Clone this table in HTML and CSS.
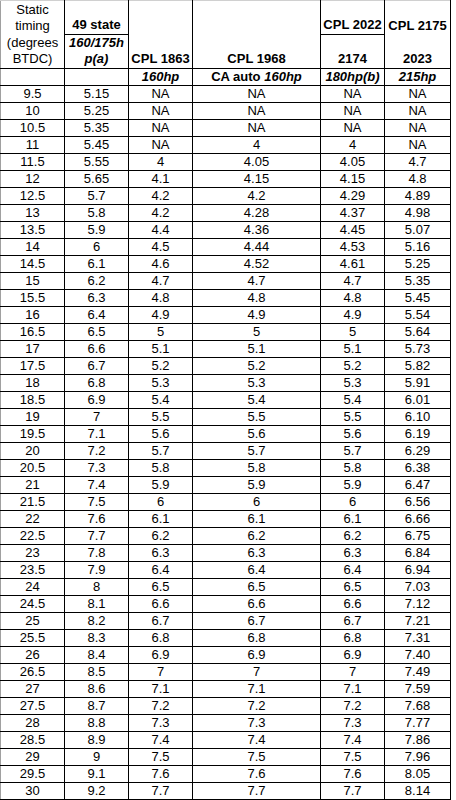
FILE: index.html
```html
<!DOCTYPE html>
<html>
<head>
<meta charset="utf-8">
<link rel="stylesheet" href="styles.css">
</head>
<body>
<table class="sheet">
  <colgroup>
    <col class="w64"><col class="w64"><col class="w64"><col class="w128"><col class="w64"><col class="w66">
  </colgroup>
  <tbody>
    <tr class="hrow">
      <td rowspan="2" class="top plain label">Static timing (degrees BTDC)</td>
      <td class="top b">49 state</td>
      <td rowspan="2" class="top b">CPL 1863</td>
      <td rowspan="2" class="top b">CPL 1968</td>
      <td class="top b">CPL 2022</td>
      <td class="top b nobot">CPL 2175</td>
    </tr>
    <tr class="hrow">
      <td class="b i">160/175h<wbr>p(a)</td>
      <td class="b">2174</td>
      <td class="b notop">2023</td>
    </tr>
    <tr class="drow">
      <td></td>
      <td></td>
      <td class="b i">160hp</td>
      <td class="b">CA auto <span class="i">160hp</span></td>
      <td class="b i">180hp(b)</td>
      <td class="b i">215hp</td>
    </tr>
    <tr class="drow"><td>9.5</td><td>5.15</td><td>NA</td><td>NA</td><td>NA</td><td>NA</td></tr>
    <tr class="drow"><td>10</td><td>5.25</td><td>NA</td><td>NA</td><td>NA</td><td>NA</td></tr>
    <tr class="drow"><td>10.5</td><td>5.35</td><td>NA</td><td>NA</td><td>NA</td><td>NA</td></tr>
    <tr class="drow"><td>11</td><td>5.45</td><td>NA</td><td>4</td><td>4</td><td>NA</td></tr>
    <tr class="drow"><td>11.5</td><td>5.55</td><td>4</td><td>4.05</td><td>4.05</td><td>4.7</td></tr>
    <tr class="drow"><td>12</td><td>5.65</td><td>4.1</td><td>4.15</td><td>4.15</td><td>4.8</td></tr>
    <tr class="drow"><td>12.5</td><td>5.7</td><td>4.2</td><td>4.2</td><td>4.29</td><td>4.89</td></tr>
    <tr class="drow"><td>13</td><td>5.8</td><td>4.2</td><td>4.28</td><td>4.37</td><td>4.98</td></tr>
    <tr class="drow"><td>13.5</td><td>5.9</td><td>4.4</td><td>4.36</td><td>4.45</td><td>5.07</td></tr>
    <tr class="drow"><td>14</td><td>6</td><td>4.5</td><td>4.44</td><td>4.53</td><td>5.16</td></tr>
    <tr class="drow"><td>14.5</td><td>6.1</td><td>4.6</td><td>4.52</td><td>4.61</td><td>5.25</td></tr>
    <tr class="drow"><td>15</td><td>6.2</td><td>4.7</td><td>4.7</td><td>4.7</td><td>5.35</td></tr>
    <tr class="drow"><td>15.5</td><td>6.3</td><td>4.8</td><td>4.8</td><td>4.8</td><td>5.45</td></tr>
    <tr class="drow"><td>16</td><td>6.4</td><td>4.9</td><td>4.9</td><td>4.9</td><td>5.54</td></tr>
    <tr class="drow"><td>16.5</td><td>6.5</td><td>5</td><td>5</td><td>5</td><td>5.64</td></tr>
    <tr class="drow"><td>17</td><td>6.6</td><td>5.1</td><td>5.1</td><td>5.1</td><td>5.73</td></tr>
    <tr class="drow"><td>17.5</td><td>6.7</td><td>5.2</td><td>5.2</td><td>5.2</td><td>5.82</td></tr>
    <tr class="drow"><td>18</td><td>6.8</td><td>5.3</td><td>5.3</td><td>5.3</td><td>5.91</td></tr>
    <tr class="drow"><td>18.5</td><td>6.9</td><td>5.4</td><td>5.4</td><td>5.4</td><td>6.01</td></tr>
    <tr class="drow"><td>19</td><td>7</td><td>5.5</td><td>5.5</td><td>5.5</td><td>6.10</td></tr>
    <tr class="drow"><td>19.5</td><td>7.1</td><td>5.6</td><td>5.6</td><td>5.6</td><td>6.19</td></tr>
    <tr class="drow"><td>20</td><td>7.2</td><td>5.7</td><td>5.7</td><td>5.7</td><td>6.29</td></tr>
    <tr class="drow"><td>20.5</td><td>7.3</td><td>5.8</td><td>5.8</td><td>5.8</td><td>6.38</td></tr>
    <tr class="drow"><td>21</td><td>7.4</td><td>5.9</td><td>5.9</td><td>5.9</td><td>6.47</td></tr>
    <tr class="drow"><td>21.5</td><td>7.5</td><td>6</td><td>6</td><td>6</td><td>6.56</td></tr>
    <tr class="drow"><td>22</td><td>7.6</td><td>6.1</td><td>6.1</td><td>6.1</td><td>6.66</td></tr>
    <tr class="drow"><td>22.5</td><td>7.7</td><td>6.2</td><td>6.2</td><td>6.2</td><td>6.75</td></tr>
    <tr class="drow"><td>23</td><td>7.8</td><td>6.3</td><td>6.3</td><td>6.3</td><td>6.84</td></tr>
    <tr class="drow"><td>23.5</td><td>7.9</td><td>6.4</td><td>6.4</td><td>6.4</td><td>6.94</td></tr>
    <tr class="drow"><td>24</td><td>8</td><td>6.5</td><td>6.5</td><td>6.5</td><td>7.03</td></tr>
    <tr class="drow"><td>24.5</td><td>8.1</td><td>6.6</td><td>6.6</td><td>6.6</td><td>7.12</td></tr>
    <tr class="drow"><td>25</td><td>8.2</td><td>6.7</td><td>6.7</td><td>6.7</td><td>7.21</td></tr>
    <tr class="drow"><td>25.5</td><td>8.3</td><td>6.8</td><td>6.8</td><td>6.8</td><td>7.31</td></tr>
    <tr class="drow"><td>26</td><td>8.4</td><td>6.9</td><td>6.9</td><td>6.9</td><td>7.40</td></tr>
    <tr class="drow"><td>26.5</td><td>8.5</td><td>7</td><td>7</td><td>7</td><td>7.49</td></tr>
    <tr class="drow"><td>27</td><td>8.6</td><td>7.1</td><td>7.1</td><td>7.1</td><td>7.59</td></tr>
    <tr class="drow"><td>27.5</td><td>8.7</td><td>7.2</td><td>7.2</td><td>7.2</td><td>7.68</td></tr>
    <tr class="drow"><td>28</td><td>8.8</td><td>7.3</td><td>7.3</td><td>7.3</td><td>7.77</td></tr>
    <tr class="drow"><td>28.5</td><td>8.9</td><td>7.4</td><td>7.4</td><td>7.4</td><td>7.86</td></tr>
    <tr class="drow"><td>29</td><td>9</td><td>7.5</td><td>7.5</td><td>7.5</td><td>7.96</td></tr>
    <tr class="drow"><td>29.5</td><td>9.1</td><td>7.6</td><td>7.6</td><td>7.6</td><td>8.05</td></tr>
    <tr class="drow"><td>30</td><td>9.2</td><td>7.7</td><td>7.7</td><td>7.7</td><td>8.14</td></tr>
  </tbody>
</table>
</body>
</html>
```
FILE: styles.css
```css
html, body {
  margin: 0;
  padding: 0;
  background: #ffffff;
}
body {
  font-family: "Liberation Sans", Arial, sans-serif;
  font-size: 13px;
  color: #000000;
}
.sheet {
  border-collapse: collapse;
  table-layout: fixed;
  width: 451px;
}
.w64 { width: 64px; }
.w128 { width: 128px; }
.w66 { width: 66px; }
.sheet td {
  border: 1px solid #000000;
  padding: 0 1px;
  text-align: center;
  white-space: nowrap;
  overflow: hidden;
}
.sheet tr > td:first-child {
  border-left-color: #a0a0a0;
}
.sheet td.top {
  border-top-color: #d0d0d0;
}
.hrow td {
  height: 32px;
  vertical-align: bottom;
  line-height: 16px;
  white-space: normal;
  padding-bottom: 1px;
}
.hrow td.label {
  vertical-align: middle;
  line-height: 16.5px;
  padding: 0;
}
.drow td {
  height: 16px;
  line-height: 16px;
  vertical-align: middle;
  padding-top: 0;
  padding-bottom: 0;
}
.b { font-weight: bold; }
.i { font-style: italic; }
.plain { font-weight: normal; }
.sheet td.nobot { border-bottom: hidden; }
.sheet td.notop { border-top: hidden; }
```
